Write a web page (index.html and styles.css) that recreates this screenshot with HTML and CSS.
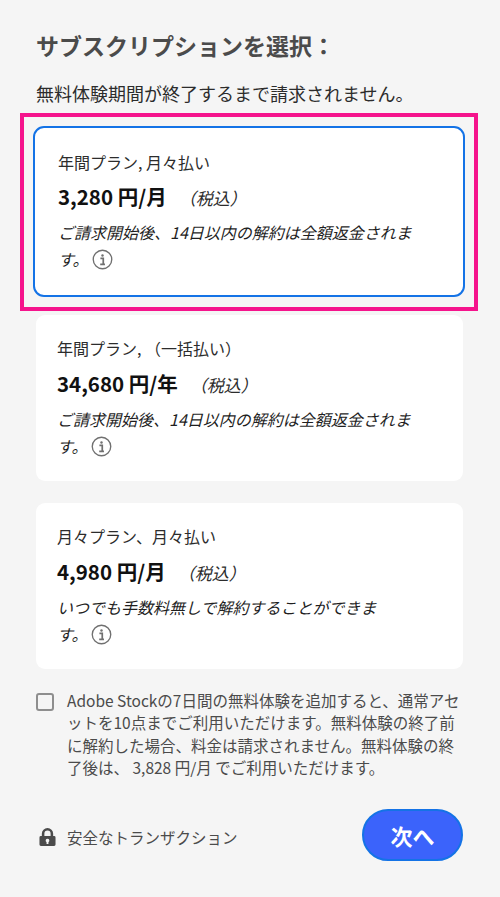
FILE: index.html
```html
<!DOCTYPE html>
<html lang="ja">
<head>
<meta charset="utf-8">
<title>サブスクリプションを選択</title>
<link rel="stylesheet" href="styles.css">
</head>
<body>
<main class="page">
  <h1 class="title">サブスクリプションを選択：</h1>
  <p class="lead">無料体験期間が終了するまで請求されません。</p>
  <div class="plans">
    <section class="plan plan-selected">
      <div class="plan-name">年間プラン, 月々払い</div>
      <div class="plan-price"><strong>3,280 円/月</strong><em class="tax">（税込）</em></div>
      <div class="plan-note">ご請求開始後、14日以内の解約は全額返金されます。<svg class="info" viewBox="0 0 22 22"><circle cx="11" cy="11" r="9.7"/><circle class="dot" cx="11" cy="6.8" r="1.3"/><path d="M8.800 9.800h3v6M8.600 16h5"/></svg></div>
    </section>
    <section class="plan">
      <div class="plan-name">年間プラン, （一括払い）</div>
      <div class="plan-price"><strong>34,680 円/年</strong><em class="tax">（税込）</em></div>
      <div class="plan-note">ご請求開始後、14日以内の解約は全額返金されます。<svg class="info" viewBox="0 0 22 22"><circle cx="11" cy="11" r="9.7"/><circle class="dot" cx="11" cy="6.8" r="1.3"/><path d="M8.800 9.800h3v6M8.600 16h5"/></svg></div>
    </section>
    <section class="plan">
      <div class="plan-name">月々プラン、月々払い</div>
      <div class="plan-price"><strong>4,980 円/月</strong><em class="tax">（税込）</em></div>
      <div class="plan-note">いつでも手数料無しで解約することができま<br>す。<svg class="info" viewBox="0 0 22 22"><circle cx="11" cy="11" r="9.7"/><circle class="dot" cx="11" cy="6.8" r="1.3"/><path d="M8.800 9.800h3v6M8.600 16h5"/></svg></div>
    </section>
  </div>
  <label class="addon">
    <span class="checkbox"></span>
    <span class="addon-text">Adobe Stockの7日間の無料体験を追加すると、通常アセットを10点までご利用いただけます。無料体験の終了前に解約した場合、料金は請求されません。無料体験の終了後は、 3,828 円/月 でご利用いただけます。</span>
  </label>
  <footer class="footer">
    <div class="secure">
      <svg class="lock" viewBox="0 0 18 20"><path fill-rule="evenodd" d="M9 .5a6 6 0 0 0-6 6V9H2a1.500 1.500 0 0 0-1.500 1.500v7.500A1.500 1.500 0 0 0 2 19.500h14a1.500 1.500 0 0 0 1.500-1.500v-7.500A1.500 1.500 0 0 0 16 9h-1V6.500a6 6 0 0 0-6-6zM5.700 9V6.500a3.300 3.300 0 0 1 6.600 0V9zM9 11.800a2 2 0 0 1 1 3.700V17.500H8v-2a2 2 0 0 1 1-3.700z"/></svg>
      <span>安全なトランザクション</span>
    </div>
    <button class="next" type="button">次へ</button>
  </footer>
</main>
</body>
</html>
```
FILE: styles.css
```css
* { box-sizing: border-box; }
html, body { margin: 0; }
body {
  width: 500px;
  height: 897px;
  background: #f5f5f5;
  font-family: "Noto Sans CJK JP", "Open Sans", sans-serif;
  color: #2c2c2c;
  overflow: hidden;
}
.page { padding: 28px 37px 0 36px; }
.title {
  margin: 0;
  font-size: 23px;
  line-height: 34px;
  font-weight: 700;
  color: #4b4b4b;
}
.lead {
  margin: 18px 0 0;
  font-size: 18px;
  line-height: 26px;
  color: #2c2c2c;
}
.plans { margin-top: 20px; display: flex; flex-direction: column; gap: 22px; }
.plan {
  position: relative;
  background: #fff;
  border-radius: 9px;
  padding: 22px 27px 20px 21px;
  height: 166px;
}
.plan-selected {
  height: 171px;
  margin: 0 -2px -4px -3px;
  padding: 23px 31px 20px 23px;
  border: 2px solid #1473e6;
  border-radius: 11px;
}
.plan-selected::after {
  content: "";
  position: absolute;
  left: -15px;
  right: -15px;
  top: -15px;
  bottom: -16px;
  border: 4px solid #f5148c;
  pointer-events: none;
}
.plan-name { font-size: 16px; line-height: 22px; color: #2c2c2c; }
.plan-price { margin-top: 9px; line-height: 30px; display: flex; align-items: baseline; }
.plan-selected .plan-price { margin-top: 8px; }
.plan-price strong { font-size: 20.500px; font-weight: 700; color: #111; }
.tax { font-size: 17px; font-style: italic; color: #2c2c2c; margin-left: 12px; }
.plan-note { margin-top: 6px; font-size: 16px; line-height: 27px; font-style: italic; color: #1f1f1f; }
.info { width: 21px; height: 21px; margin-left: 4px; vertical-align: -4px; }
.info circle { fill: none; stroke: #707070; stroke-width: 1.400; }
.info .dot { fill: #707070; stroke: none; }
.info path { fill: none; stroke: #707070; stroke-width: 1.800; }
.addon { display: flex; align-items: flex-start; margin-top: 20px; }
.checkbox {
  flex: none;
  width: 18px;
  height: 18px;
  margin-top: 4px;
  border: 2px solid #8e8e8e;
  border-radius: 3px;
  background: #f5f5f5;
}
.addon-text { margin-left: 13px; width: 395px; font-size: 15.500px; line-height: 22.400px; color: #4b4b4b; }
.footer { display: flex; align-items: center; justify-content: space-between; margin-top: 30px; }
.secure { display: flex; align-items: center; margin-top: 4px; font-size: 15.500px; color: #4b4b4b; }
.lock { width: 17px; height: 20px; fill: #4b4b4b; margin: 0 11px 0 3px; }
.next {
  width: 101px;
  height: 52px;
  border: 2px solid #1473e6;
  border-radius: 26px;
  background: #3b63fb;
  color: #fff;
  font: 700 22px/1 "Noto Sans CJK JP", sans-serif;
}
```
